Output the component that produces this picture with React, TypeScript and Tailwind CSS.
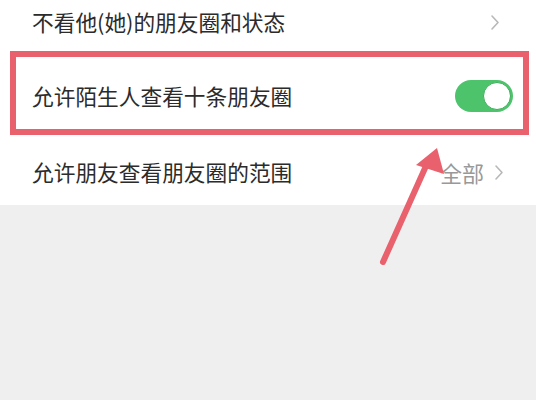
import React from 'react';

const font = { fontFamily: '"Noto Sans CJK SC", "Noto Sans", sans-serif' };

const Chevron = () => (
    <svg width="10" height="17" viewBox="0 0 10 17" className="shrink-0">
        <path d="M2 2 L8 8.5 L2 15" fill="none" stroke="#b8b8b8" strokeWidth="1.6" strokeLinecap="round" strokeLinejoin="round" />
    </svg>
);

const Toggle = () => (
    <div className="w-[58px] h-[32px] rounded-full bg-[#4dc46c] flex items-center justify-end p-[2px]">
        <div className="w-[28px] h-[28px] rounded-full bg-white border border-[#3fae5c]" />
    </div>
);

export default function App() {
    return (
        <div className="relative w-[536px] h-[400px] flex flex-col bg-white text-[#2b2b2b] overflow-hidden" style={font}>
            <div className="h-[51px] pb-[6px] pl-[32px] pr-[36px] flex items-center justify-between">
                <span className="text-[21.7px]">不看他(她)的朋友圈和状态</span>
                <Chevron />
            </div>

            <div className="ml-[10px] mr-[7px] h-[84px] border-[6px] border-[#e9616d]">
                <div className="h-full pt-[6px] pl-[16px] pr-[10px] flex items-center justify-between">
                    <span className="text-[21.7px]">允许陌生人查看十条朋友圈</span>
                    <Toggle />
                </div>
            </div>

            <div className="h-[70px] pt-[4px] pl-[32px] pr-[32px] flex items-center justify-between">
                <span className="text-[21.7px]">允许朋友查看朋友圈的范围</span>
                <div className="flex items-center gap-[10px]">
                    <span className="text-[22px] text-[#999]">全部</span>
                    <Chevron />
                </div>
            </div>

            <div className="flex-1 bg-[#efefef]" />

            <svg className="absolute left-0 top-0 pointer-events-none" width="536" height="400" viewBox="0 0 536 400">
                <line x1="383" y1="262" x2="426" y2="166" stroke="#e9616d" strokeWidth="6" strokeLinecap="round" />
                <polygon points="437,148 416,165 444,174" fill="#e9616d" />
            </svg>
        </div>
    );
}
